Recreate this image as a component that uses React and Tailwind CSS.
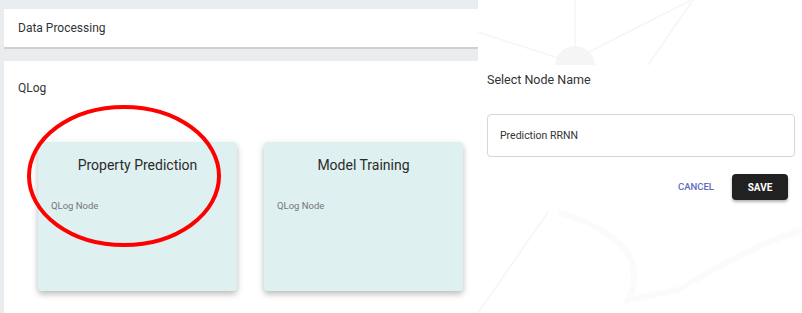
import React from 'react';

function NodeCard({ title }) {
  return (
    <div className="w-[199px] h-[149px] bg-[#dff0f0] rounded-[4px] shadow-[0_3px_6px_rgba(0,0,0,0.28)] px-[13px] pt-[14px]">
      <h3 className="text-center text-[14px] leading-[18px] text-[#2b2b2b]">{title}</h3>
      <p className="mt-[25px] text-[9.5px] leading-[14px] text-[#757575]">QLog Node</p>
    </div>
  );
}

export default function App() {
  return (
    <div className="flex w-[802px] h-[313px] overflow-hidden font-['Roboto',sans-serif]">
      {/* Left: processing panel */}
      <div className="w-[478px] shrink-0 bg-[#e9edf0] pl-1 pt-[9px] flex flex-col gap-[12px]">
        <div className="bg-white h-[40px] border-b-2 border-[#cdd1d4] flex items-center pl-[14px] text-[12px] text-[#333]">
          Data Processing
        </div>
        <div className="bg-white flex-1 relative pl-[14px] pt-[19px]">
          <p className="text-[12px] leading-[16px] text-[#333]">QLog</p>
          <div className="flex gap-[27px] ml-[20px] mt-[46px]">
            <NodeCard title="Property Prediction" />
            <NodeCard title="Model Training" />
          </div>
          {/* highlight */}
          <svg className="absolute left-[22px] top-[42px] pointer-events-none" width="200" height="146" viewBox="0 0 200 146">
            <ellipse cx="98" cy="73" rx="95" ry="69" fill="none" stroke="#f00" strokeWidth="4" />
          </svg>
        </div>
      </div>

      {/* Right: node name dialog */}
      <div className="flex-1 bg-white relative pl-[9px] pr-[7px]">
        <svg className="absolute inset-0 pointer-events-none" width="324" height="313" viewBox="0 0 324 313">
          <g stroke="#f5f5f5" strokeWidth="1.5" fill="none">
            <line x1="97" y1="0" x2="97" y2="60" />
            <line x1="0" y1="32" x2="92" y2="62" />
            <line x1="105" y1="55" x2="213" y2="0" />
            <line x1="170" y1="65" x2="215" y2="0" />
            <line x1="70" y1="212" x2="0" y2="313" />
          </g>
          <clipPath id="top">
            <rect x="0" y="0" width="324" height="65" />
          </clipPath>
          <circle cx="97" cy="66" r="20" fill="#f5f5f5" clipPath="url(#top)" />
          <path d="M80 212 C 140 230, 170 260, 150 300 L 200 290 C 250 260, 290 240, 324 230" stroke="#fbfbfb" strokeWidth="6" fill="none" />
        </svg>
        <div className="relative pt-[72px]">
          <h2 className="text-[12.5px] leading-[16px] text-[#333]">Select Node Name</h2>
          <div className="mt-[26px] h-[43px] rounded-[4px] border border-[#d6d6d6] flex items-center pl-[12px] text-[10.5px] text-[#333]">
            Prediction RRNN
          </div>
          <div className="flex items-center justify-end gap-[18px] mt-[17px] pr-[7px]">
            <button className="text-[9.5px] font-medium text-[#5c6bc0]">CANCEL</button>
            <button className="w-[56px] h-[26px] rounded-[4px] bg-[#212121] text-white text-[10px] font-bold shadow-[0_2px_3px_rgba(0,0,0,0.3)]">
              SAVE
            </button>
          </div>
        </div>
      </div>
    </div>
  );
}
